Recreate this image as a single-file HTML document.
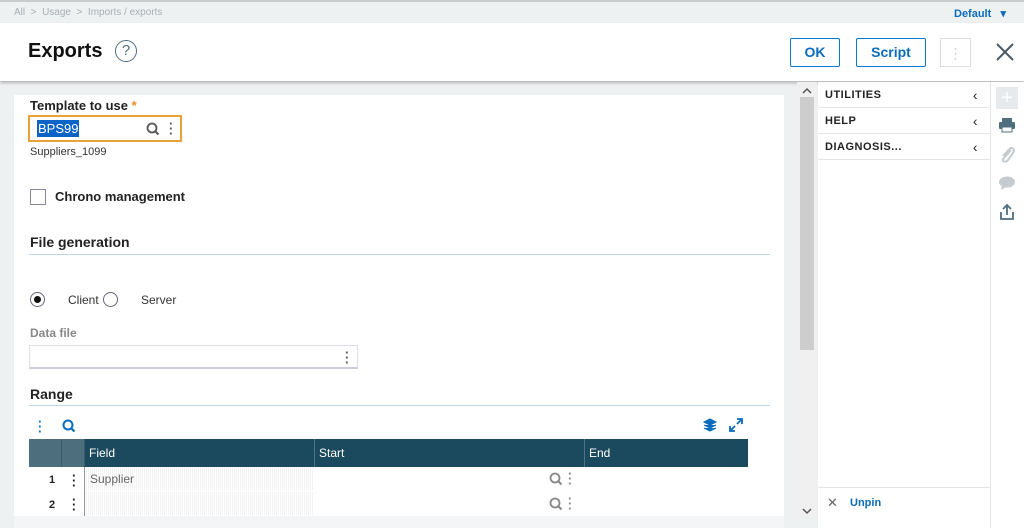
<!DOCTYPE html>
<html><head><meta charset="utf-8"><style>
*{box-sizing:border-box;margin:0;padding:0}
body{width:1024px;height:528px;overflow:hidden;background:#eef1f2;font-family:"Liberation Sans",sans-serif;position:relative;color:#222}
.abs{position:absolute}
.bc{left:0;top:0;width:1024px;height:23px;background:#eef1f2;border-top:2px solid #c8cccf;font-size:10px;color:#a8b0b4}
.hdr{left:0;top:23px;width:1024px;height:58px;background:#fff;box-shadow:0 2px 3px rgba(0,0,0,.25)}
.btn{border:1.5px solid #0a7ad1;color:#0a6cbd;font-weight:bold;font-size:14px;text-align:center;line-height:26px;height:29px;border-radius:2px}
.card{left:14px;top:95px;width:770px;height:433px;background:#fff}
.lbl{font-weight:bold;font-size:13px;color:#222}
.sec{font-weight:bold;font-size:14px;color:#222}
.line{height:1px;background:#bcd8ee}
.th{background:#1b4a5e;color:#fff;font-size:12px;line-height:28px;padding-left:4px;border-right:1px solid #4d7484}
.rp{left:818px;top:82px;width:172px;height:446px;background:#fff}
.ri{height:26px;border-bottom:1px solid #e3e6e8;font-weight:bold;font-size:11px;letter-spacing:.5px;line-height:26px;padding-left:7px;position:relative}
.ri span{position:absolute;right:12px;top:0;font-weight:normal;font-size:14px}
.dots{color:#555;font-weight:bold;font-size:13px;line-height:5px;width:4px;text-align:center}
</style></head><body>
<div class="abs bc"><span class="abs" style="left:14px;top:5px">All &nbsp;&gt;&nbsp; Usage &nbsp;&gt;&nbsp; Imports / exports</span>
<span class="abs" style="left:954px;top:5px;color:#0a6cbd;font-weight:bold;font-size:11px">Default &nbsp;&nbsp;▾</span></div>
<div class="abs hdr">
<div class="abs" style="left:28px;top:17px;font-size:20px;font-weight:bold;color:#111">Exports</div>
<div class="abs" style="left:115px;top:17px;width:22px;height:22px;border:1.5px solid #4f6f7f;border-radius:50%;text-align:center;font-size:15px;line-height:19px;color:#4f6f7f">?</div>
<div class="abs btn" style="left:790px;top:15px;width:50px">OK</div>
<div class="abs btn" style="left:856px;top:15px;width:70px">Script</div>
<div class="abs" style="left:940px;top:15px;width:31px;height:29px;border:1px solid #ddd;color:#ccc;text-align:center;font-size:14px;line-height:28px">⋮</div>
<svg class="abs" style="left:995px;top:19px" width="20" height="20"><path d="M2 2L18 18M18 2L2 18" stroke="#4a5a64" stroke-width="2"/></svg>
</div>
<div class="abs card">
<div class="abs lbl" style="left:16px;top:3px">Template to use <span style="color:#f08a24">*</span></div>
<div class="abs" style="left:14px;top:20px;width:154px;height:27px;border:2px solid #e8a23a"></div>
<div class="abs" style="left:23px;top:25px;background:#0a63c6;color:#fff;font-size:13px;padding:0 1px;height:17px;line-height:17px">BPS99</div>
<svg class="abs" style="left:132px;top:27px" width="14" height="14"><circle cx="6" cy="6" r="4.5" fill="none" stroke="#555" stroke-width="1.8"/><path d="M9 9L12.5 12.5" stroke="#555" stroke-width="2"/></svg>
<div class="abs dots" style="left:155px;top:26px">·<br>·<br>·</div>
<div class="abs" style="left:16px;top:51px;font-size:11px;color:#333">Suppliers_1099</div>
<div class="abs" style="left:16px;top:94px;width:16px;height:16px;border:1px solid #889"></div>
<div class="abs lbl" style="left:41px;top:94px">Chrono management</div>
<div class="abs sec" style="left:16px;top:139px">File generation</div>
<div class="abs line" style="left:15px;top:159px;width:741px"></div>
<div class="abs" style="left:16px;top:197px;width:15px;height:15px;border:1px solid #667;border-radius:50%"><div style="margin:3px;width:7px;height:7px;background:#111;border-radius:50%"></div></div>
<div class="abs" style="left:54px;top:198px;font-size:12px;color:#333">Client</div>
<div class="abs" style="left:89px;top:197px;width:15px;height:15px;border:1px solid #667;border-radius:50%"></div>
<div class="abs" style="left:127px;top:198px;font-size:12px;color:#333">Server</div>
<div class="abs lbl" style="left:16px;top:231px;color:#888;font-size:12px">Data file</div>
<div class="abs" style="left:15px;top:250px;width:329px;height:24px;border:1px solid #dde;border-bottom:2px solid #ccd"></div>
<div class="abs dots" style="left:331px;top:255px">·<br>·<br>·</div>
<div class="abs sec" style="left:16px;top:291px">Range</div>
<div class="abs line" style="left:15px;top:310px;width:741px"></div>
<div class="abs dots" style="left:24px;top:324px;color:#0a6cbd">·<br>·<br>·</div>
<svg class="abs" style="left:48px;top:324px" width="14" height="14"><circle cx="6" cy="6" r="4.5" fill="none" stroke="#0a6cbd" stroke-width="2"/><path d="M9 9L12.5 12.5" stroke="#0a6cbd" stroke-width="2.2"/></svg>
<svg class="abs" style="left:689px;top:323px" width="14" height="14"><path d="M7 1L13 4L7 7L1 4Z M1 7L7 10L13 7 M1 10L7 13L13 10" fill="#0a6cbd" stroke="#0a6cbd" stroke-width="1.2"/></svg>
<svg class="abs" style="left:715px;top:323px" width="14" height="14"><path d="M8 1H13V6M13 1L8 6M6 13H1V8M1 13L6 8" fill="none" stroke="#0a6cbd" stroke-width="1.8"/></svg>
<div class="abs" style="left:15px;top:344px;width:33px;height:28px;background:#4d6f7d;border-right:1px solid #3a5c6a"></div>
<div class="abs" style="left:48px;top:344px;width:23px;height:28px;background:#4d6f7d;border-right:1px solid #3a5c6a"></div>
<div class="abs th" style="left:71px;top:344px;width:230px">Field</div>
<div class="abs th" style="left:301px;top:344px;width:270px">Start</div>
<div class="abs th" style="left:571px;top:344px;width:163px;border-right:0">End</div>
<div class="abs" style="left:70px;top:372px;width:1px;height:56px;background:#999"></div>
<div class="abs" style="left:35px;top:379px;font-size:11px;font-weight:bold">1</div>
<div class="abs dots" style="left:58px;top:378px;color:#222">·<br>·<br>·</div>
<div class="abs" style="left:72px;top:372px;width:228px;height:23px;background:repeating-linear-gradient(90deg,#f3f3f3 0 1px,#fff 1px 2px);font-size:12px;color:#666;padding:5px 4px">Supplier</div>
<div class="abs" style="left:72px;top:397px;width:228px;height:23px;background:repeating-linear-gradient(90deg,#f3f3f3 0 1px,#fff 1px 2px)"></div>
<div class="abs" style="left:35px;top:404px;font-size:11px;font-weight:bold">2</div>
<div class="abs dots" style="left:58px;top:402px;color:#222">·<br>·<br>·</div>
<svg class="abs" style="left:535px;top:377px" width="14" height="14"><circle cx="6" cy="6" r="4.5" fill="none" stroke="#888" stroke-width="1.8"/><path d="M9 9L12.5 12.5" stroke="#888" stroke-width="2"/></svg>
<div class="abs dots" style="left:554px;top:376px;color:#888">·<br>·<br>·</div>
<svg class="abs" style="left:535px;top:402px" width="14" height="14"><circle cx="6" cy="6" r="4.5" fill="none" stroke="#888" stroke-width="1.8"/><path d="M9 9L12.5 12.5" stroke="#888" stroke-width="2"/></svg>
<div class="abs dots" style="left:554px;top:401px;color:#888">·<br>·<br>·</div>
<div class="abs" style="left:0;top:421px;width:770px;height:12px;background:#f4f5f6"></div>
</div>
<div class="abs" style="left:797px;top:82px;width:20px;height:436px;background:#f0f0f0"></div>
<div class="abs" style="left:800px;top:97px;width:14px;height:253px;background:#cdcdcd"></div>
<svg class="abs" style="left:802px;top:87px" width="10" height="7"><path d="M1 6L5 2L9 6" fill="none" stroke="#555" stroke-width="1.5"/></svg>
<svg class="abs" style="left:802px;top:508px" width="10" height="7"><path d="M1 1L5 5L9 1" fill="none" stroke="#555" stroke-width="1.5"/></svg>
<div class="abs rp">
<div class="ri">UTILITIES<span>‹</span></div>
<div class="ri">HELP<span>‹</span></div>
<div class="ri">DIAGNOSIS...<span>‹</span></div>
<div class="abs" style="left:0;top:405px;width:172px;height:1px;background:#e3e6e8"></div>
<div class="abs" style="left:9px;top:413px;font-size:13px;color:#666">✕</div>
<div class="abs" style="left:32px;top:415px;font-size:11px;font-weight:bold;color:#0a6cbd">Unpin</div>
</div>
<div class="abs" style="left:990px;top:82px;width:34px;height:446px;background:#fff;border-left:1px solid #e3e6e8"></div>
<div class="abs" style="left:996px;top:87px;width:22px;height:22px;background:#e6eaec;color:#fff;font-size:20px;text-align:center;line-height:22px">+</div>
<svg class="abs" style="left:998px;top:117px" width="18" height="16"><rect x="4" y="1" width="10" height="4" fill="#4f6f7f"/><rect x="1" y="5" width="16" height="7" rx="1" fill="#4f6f7f"/><rect x="4" y="10" width="10" height="5" fill="#fff" stroke="#4f6f7f"/></svg>
<svg class="abs" style="left:999px;top:145px" width="16" height="18"><path d="M12 5L5 13Q3 15.5 5 16.5Q7 17.5 9 15L14 8Q16 5 14 3.5Q12 2 10 4.5L4 11" fill="none" stroke="#c5cbcf" stroke-width="2"/></svg>
<svg class="abs" style="left:998px;top:176px" width="18" height="14"><ellipse cx="9" cy="6" rx="8" ry="5.5" fill="#c5cbcf"/><path d="M4 10L3 14L8 11Z" fill="#c5cbcf"/></svg>
<svg class="abs" style="left:999px;top:203px" width="16" height="17"><path d="M8 12V2M4 6L8 2L12 6M2 9V16H14V9" fill="none" stroke="#4f6f7f" stroke-width="1.8"/></svg>
</body></html>
